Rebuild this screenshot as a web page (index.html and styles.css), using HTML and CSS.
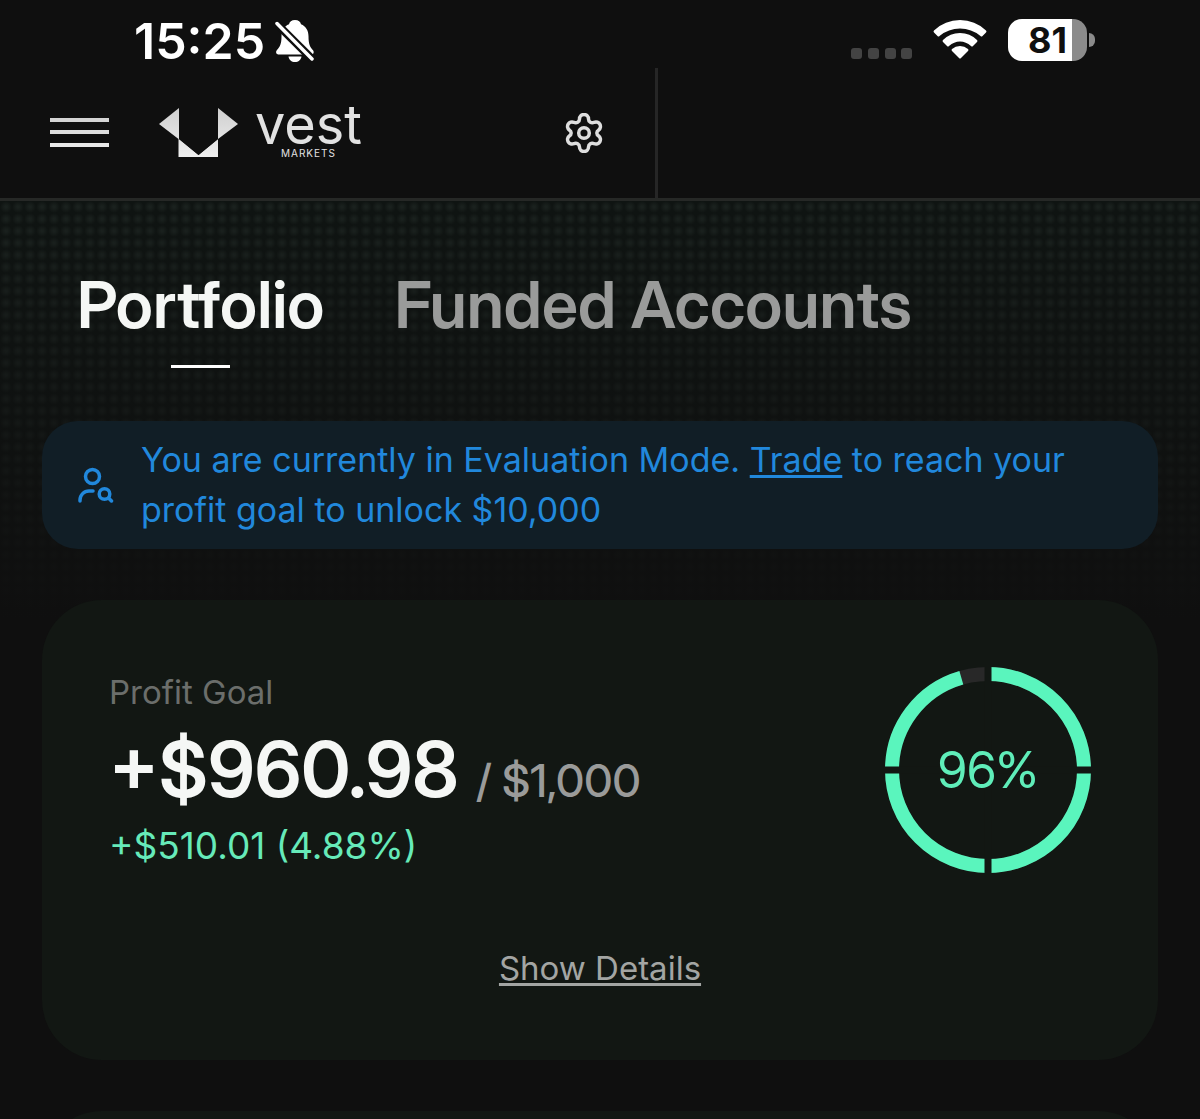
FILE: index.html
```html
<!DOCTYPE html>
<html lang="en">
<head>
<meta charset="utf-8">
<meta name="viewport" content="width=device-width, initial-scale=1">
<title>Vest Markets – Portfolio</title>
<link rel="stylesheet" href="styles.css">
</head>
<body>
<div class="app">
  <div class="status">
    <div class="status-side">
      <span class="clock">15:25</span>
      <svg class="bell" viewBox="0 0 40 42" width="40" height="42" aria-label="Silent mode">
        <path fill="#fff" d="M20 0c3.500 0 5.500 2 6 4.200 5 2 7.500 6.500 7.500 12 0 8 1.500 10.500 4.500 14 1.500 2 .5 4.300-2 4.300H4c-2.800 0-3.800-2.400-2-4.500C5 26.500 6.500 24 6.500 16.200c0-5.500 2.500-10 7.500-12C14.500 2 16.500 0 20 0zM13.500 36.500h13C26 40 23.500 42 20 42s-6-2-6.500-5.500z"/>
        <path stroke="#0f0f0f" stroke-width="8" d="M0 2l39 39"/>
        <path stroke="#fff" stroke-width="3.500" stroke-linecap="round" d="M2 3.500l35 35.500"/>
      </svg>
    </div>
    <div class="status-side">
      <svg class="signal" viewBox="0 0 62 11" width="62" height="11" fill="#434343" aria-label="No signal">
        <rect width="11" height="11" rx="3"/><rect x="17" width="11" height="11" rx="3"/><rect x="34" width="11" height="11" rx="3"/><rect x="50" width="11" height="11" rx="3"/>
      </svg>
      <svg class="wifi" viewBox="0 0 54 40" width="54" height="40" fill="#fff" aria-label="Wi-Fi">
        <path d="M1 11.500Q12 1 27 1t26 10.500q1 1 0 2l-3.500 3.500q-1 1-2 0Q38.500 9.500 27 9.500T6.500 17q-1 1-2 0L1 13.500q-1-1 0-2z"/>
        <path d="M10 21Q17 14 27 14t17 7q1 1 0 2l-4 4q-1 1-2 0-5-4.500-11-4.500T16 27q-1 1-2 0l-4-4q-1-1 0-2z"/>
        <path d="M19 30q3.500-3 8-3t8 3q1 1 0 2l-7 7q-1 1-2 0l-7-7q-1-1 0-2z"/>
      </svg>
      <div class="battery"><span class="battery-level">81</span><i class="battery-tip"></i></div>
    </div>
  </div>

  <header class="header">
    <div class="header-main">
      <button class="icon-button" aria-label="Menu">
        <svg viewBox="0 0 59 32" width="59" height="32">
          <path fill="#d4d4d4" d="M0 1h59v4H0z"/><path fill="#dedede" d="M0 13h59v4H0z"/><path fill="#e8e8e8" d="M0 26h59v4H0z"/>
        </svg>
      </button>
      <a class="brand" href="#" aria-label="Vest Markets">
        <svg viewBox="0 0 80 50" width="80" height="50">
          <defs><linearGradient id="sheen" x1="0" y1="0" x2="0" y2="1"><stop offset="0" stop-color="#cfcfcf"/><stop offset="1" stop-color="#efefef"/></linearGradient></defs>
          <path fill="url(#sheen)" d="M20 0v31l19.500 16L59 31V0l20 16-20 15v18H19.500V31L0 16z"/>
          <path fill="#0f0f0f" d="M20 0h39v31L39.500 47 20 31z"/>
        </svg>
        <span class="wordmark"><span class="wordmark-name">vest</span><span class="wordmark-sub">MARKETS</span></span>
      </a>
      <button class="icon-button settings" aria-label="Settings">
        <svg viewBox="0 1 38 40" width="38" height="40" fill="none" stroke="#dedede" stroke-width="3.500" stroke-linejoin="round">
          <path d="M14.500 7a4.500 4.500 0 0 1 9 0c0 3 3 4.700 5.700 3.300a4.500 4.500 0 0 1 4.500 7.700c-2.500 1.500-2.500 4.500 0 6a4.500 4.500 0 0 1-4.500 7.700c-2.700-1.400-5.700.3-5.700 3.300a4.500 4.500 0 0 1-9 0c0-3-3-4.700-5.700-3.300A4.500 4.500 0 0 1 4.300 24c2.500-1.500 2.500-4.500 0-6a4.500 4.500 0 0 1 4.500-7.700c2.700 1.400 5.700-.3 5.700-3.300z"/>
          <circle cx="19" cy="21" r="5.300"/>
        </svg>
      </button>
    </div>
  </header>

  <main class="content">
    <nav class="tabs">
      <a class="tab tab-active" href="#">Portfolio</a>
      <a class="tab" href="#">Funded Accounts</a>
    </nav>

    <section class="notice">
      <svg class="notice-icon" viewBox="0 0 36 36" width="36" height="36" fill="none" stroke="#2188dc" stroke-width="3.500" stroke-linecap="round">
        <circle cx="14.500" cy="9.500" r="7"/>
        <path d="M2 34v-1a9 9 0 0 1 9-9h4"/>
        <circle cx="26.500" cy="27" r="5.300"/><path d="M30.500 31l3 3"/>
      </svg>
      <p class="notice-text">You are currently in Evaluation Mode. <a href="#">Trade</a> to reach your profit goal to unlock $10,000</p>
    </section>

    <section class="card">
      <div class="goal">
        <div class="figures">
          <h2 class="label">Profit Goal</h2>
          <p class="amount">+$960.98 <span class="target">/ $1,000</span></p>
          <p class="change">+$510.01 (4.88%)</p>
        </div>
        <div class="ring">
          <svg viewBox="0 0 206 206" width="206" height="206" fill="none" stroke-width="14" aria-hidden="true">
            <circle cx="103" cy="103" r="96" stroke="#282828"/>
            <circle cx="103" cy="103" r="96" stroke="#5af5bd" pathLength="100" stroke-dasharray="95.500 100" transform="rotate(-90 103 103)"/>
            <path stroke="#121713" stroke-width="7" d="M103 0v206M0 103h206"/>
          </svg>
          <span class="percent">96%</span>
        </div>
      </div>
      <button class="details">Show Details</button>
    </section>

    <section class="card card-next"></section>
  </main>
</div>
</body>
</html>
```
FILE: styles.css
```css
* { box-sizing: border-box; }

body {
  margin: 0;
  background: #0f0f0f;
  color: #f5f7f5;
  font-family: Inter, "Liberation Sans", sans-serif;
}

h2, p { margin: 0; }
svg { display: block; flex: none; }
button { padding: 0; border: 0; background: none; font: inherit; cursor: pointer; }

.app {
  display: flex;
  flex-direction: column;
  height: 100vh;
}

/* Status bar */
.status {
  display: flex;
  flex: none;
  justify-content: space-between;
  height: 68px;
  padding: 11px 105px 0 134px;
}
.status-side { display: flex; align-items: flex-start; }
.clock { font-size: 50px; font-weight: 600; line-height: 60px; color: #fff; }
.bell { margin: 9px 0 0 10px; }
.signal { margin-top: 37px; }
.wifi { margin: 8px 21px 0 20px; }
.battery { display: flex; align-items: center; height: 42px; margin-top: 8px; gap: 2px; }
.battery-level {
  width: 79px;
  height: 42px;
  border-radius: 14px;
  background: linear-gradient(90deg, #fff 64px, #8b8b8b 64px);
  color: #0f0f0f;
  font-size: 36px;
  font-weight: 700;
  line-height: 42px;
  text-align: center;
}
.battery-tip { width: 6px; height: 14px; border-radius: 0 6px 6px 0; background: #8b8b8b; }

/* Header */
.header {
  display: flex;
  flex: none;
  height: 133px;
  border-bottom: 3px solid #262826;
}
.header-main {
  display: flex;
  align-items: center;
  width: 54.8%;
  padding: 0 52px 0 50px;
  border-right: 3px solid #262626;
}
.brand { display: flex; align-items: center; gap: 16px; margin-left: 50px; color: #e2e2e2; text-decoration: none; }
.wordmark { display: flex; flex-direction: column; align-items: center; }
.wordmark-name { font-size: 54px; line-height: 36px; }
.wordmark-sub { margin-top: 4px; font-size: 10px; line-height: 12px; letter-spacing: 1px; }
.settings { margin-left: auto; }

/* Content */
.content {
  display: flex;
  flex: 1;
  flex-direction: column;
  min-height: 0;
  padding: 0 42px;
  overflow-y: auto;
  scrollbar-width: none;
  background:
    linear-gradient(rgba(15, 15, 15, 0), #0f0f0f 420px),
    radial-gradient(circle, #1a211e 1px, #0f1412 6px) 0 0 / 12px 12px;
}

.tabs { display: flex; gap: 70px; padding: 64px 35px 0; }
.tab {
  display: flex;
  flex-direction: column;
  align-items: center;
  color: #9a9b9a;
  font-family: "Inter Display", Inter, "Liberation Sans", sans-serif;
  font-size: 65px;
  font-weight: 600;
  line-height: 80px;
  text-decoration: none;
}
.tab-active { color: #f5f7f5; }
.tab-active::after { content: ""; width: 59px; height: 3px; margin-top: 20px; background: #fff; }

.notice {
  display: flex;
  align-items: center;
  gap: 27px;
  margin-top: 53px;
  padding: 14px 36px;
  border-radius: 36px;
  background: #111e26;
  color: #2188dc;
}
.notice-text { font-size: 34px; line-height: 50px; }
.notice-text a { color: inherit; text-decoration-thickness: 3px; text-underline-offset: 3px; }

.card {
  display: flex;
  flex: none;
  flex-direction: column;
  margin-top: 51px;
  padding: 67px;
  border-radius: 60px;
  background: #121713;
}
.card-next { min-height: 460px; }
.goal { display: flex; justify-content: space-between; }
.label { color: #6b6e6b; font-size: 33px; font-weight: 400; line-height: 50px; }
.amount {
  font-family: "Inter Display", Inter, "Liberation Sans", sans-serif;
  font-size: 77px;
  font-weight: 600;
  line-height: 104px;
}
.target { color: #9a9b9a; font-size: 45px; font-weight: 500; line-height: 50px; }
.change { color: #66eab9; font-size: 37px; line-height: 50px; }
.ring { display: grid; place-items: center; }
.ring > * { grid-area: 1 / 1; }
.percent {
  color: #5fedb9;
  font-family: "Inter Display", Inter, "Liberation Sans", sans-serif;
  font-size: 50px;
  line-height: 60px;
}
.details {
  align-self: center;
  margin-top: 70px;
  color: #a3a5a3;
  font-size: 33px;
  line-height: 50px;
  text-decoration: underline;
  text-decoration-thickness: 3px;
  text-underline-offset: 3px;
}
```
